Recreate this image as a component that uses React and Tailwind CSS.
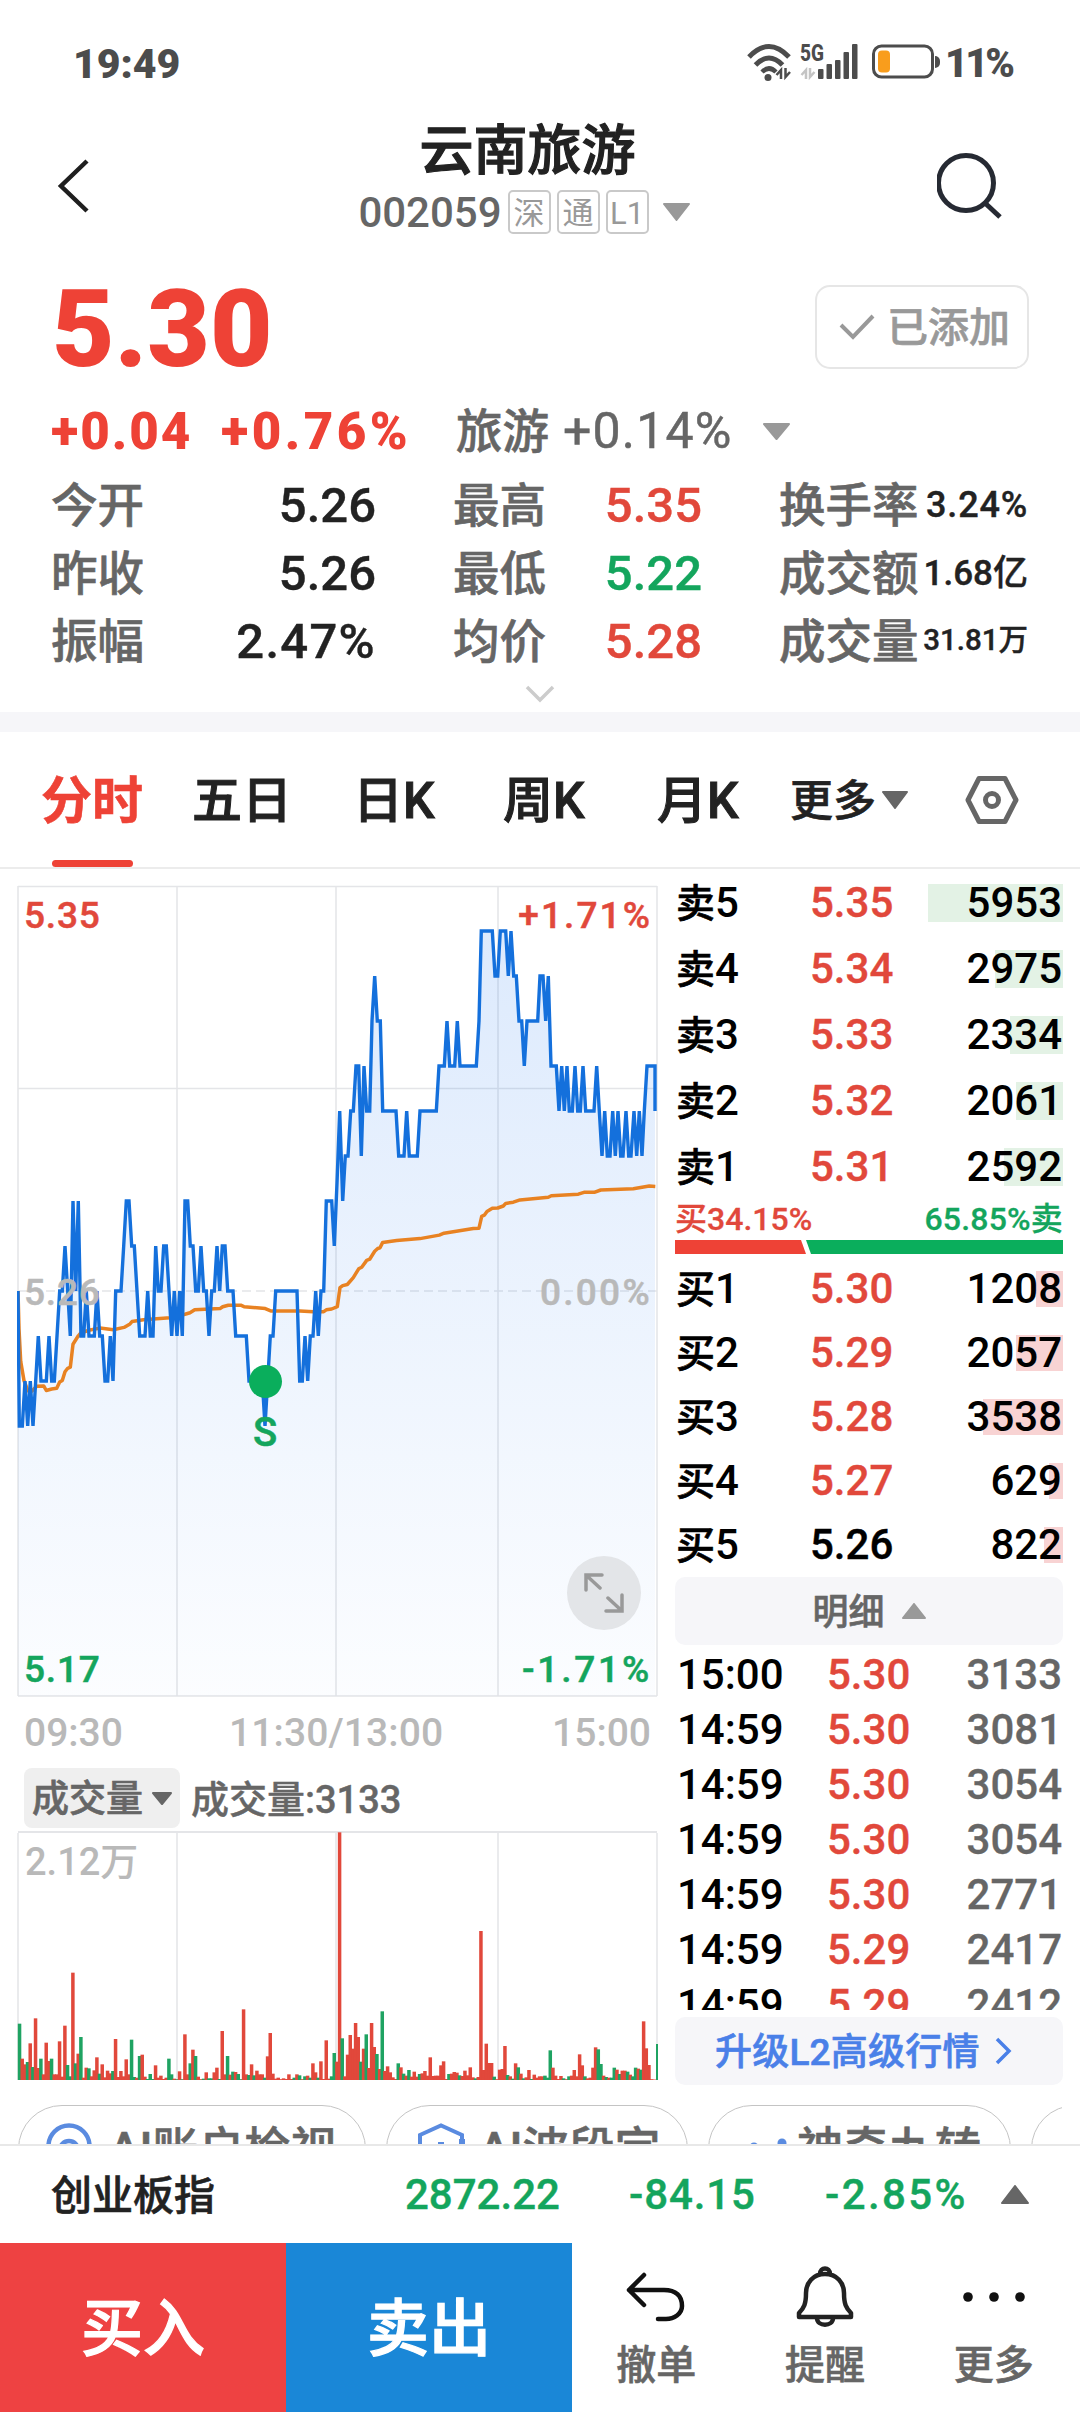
import React from "react";

const PRICE =
  "54:0 58:-3 67:-3 75:-2 83:-3 91:-2 99:-3 107:-2 115:-1 123:-2 139:-2 147:-1 155:-2 163:-2 171:-1 179:0 187:0 195:1 203:0 211:-1 219:2 227:0 235:2 243:-1 251:-1 259:0 267:-1 283:-1 291:0 299:-1 307:-1 315:-2 323:-2 331:-1 339:-2 347:0 363:0 371:1 379:2 387:2 395:1 403:1 411:0 419:-1 435:-1 443:0 451:-1 459:-1 467:1 475:0 483:0 491:1 499:1 507:0 515:-1 523:0 531:-1 539:0 547:-1 555:2 563:2 571:1 579:1 587:0 595:0 603:1 611:0 619:0 627:-1 635:0 643:0 651:1 659:0 667:1 675:1 683:0 699:0 707:-1 739:-1 747:-2 787:-2 795:-3 803:-2 811:-1 819:-1 827:0 891:0 899:-2 907:-2 915:-1 923:-2 931:-1 939:-1 947:0 955:-1 963:0 971:0 979:2 995:2 1003:1 1011:2.4 1019:4 1028:2 1036:3 1044:3 1052:4 1060:4 1068:5 1076:5 1084:3 1092:5 1100:4 1109:4 1116:6 1124:7 1132:6 1141:6 1148:4 1188:4 1196:3 1212:3 1220:4 1228:3 1252:3 1260:4 1309:4 1317:5 1333:5 1341:6 1349:5 1364:5 1372:6 1380:5 1429:5 1437:6 1444:8 1477:8 1485:7 1493:7 1501:8 1517:8 1525:7 1533:8 1541:7 1549:7 1557:6 1565:6 1573:5 1581:6 1613:6 1620:7 1629:7 1637:6 1645:7 1653:5 1669:5 1677:4 1685:5 1693:4 1701:5 1708:4 1717:4 1725:5 1733:4 1741:4 1749:5 1757:4 1782:4 1790:5 1798:4 1806:3 1814:4 1822:3 1830:3 1838:4 1846:3 1854:4 1862:3 1869:3 1878:4 1886:3 1893:3 1902:4 1910:3 1918:4 1926:3 1933:4 1941:5 1965:5 1965:4";

const AVG =
  "54:1101 57:1200 62:1285 72:1335 84:1362 96:1362 110:1350 131:1349 139:1361 155:1357 170:1355 179:1339 187:1335 195:1312 203:1303 211:1300 219:1240 235:1218 243:1210 270:1203 300:1198 340:1202 372:1196 390:1187 396:1181 430:1176 510:1171 555:1162 570:1158 584:1150 660:1147 668:1142 685:1138 722:1138 732:1142 796:1147 812:1153 900:1153 940:1155 971:1155 979:1150 995:1148 1012:1142 1020:1092 1028:1087 1042:1084 1060:1066 1076:1043 1085:1039 1100:1021 1109:1018 1124:997 1133:990 1140:988 1148:974 1190:969 1260:964 1318:955 1332:950 1420:938 1437:937 1445:906 1453:903 1461:893 1477:885 1493:884 1510:879 1517:872 1540:869 1560:863 1645:856 1654:852 1735:848 1752:843 1783:843 1802:837 1900:834 1948:827 1966:828";

// One entry per minute: height in thirds of a pixel, then r (up) or g (down).
const VOLUME =
  "169g 64r 47r 54g 110r 39g 185r 36r 64g 17r 112r 57r 64g 17r 17r 116r 10r 163r 45g 11g 322r 50g 79r 129g 7r 37r 35g 11r 29r 68r 19g 47r 8r 28r 20r 27g 123r 9r 27r 11r 62r 17r 121g 9g 7r 72g 76r 10r 3g 18g 3g 44r 7r 13r 3r 7r 64g 17g 4r 2g 26r 2g 137r 17r 50g 91r 72g 10r 2r 4g 23r 5g 5g 23r 37r 3g 147r 17r 72g 16r 25g 24r 18g 2g 212r 17r 15g 47r 14g 28r 17r 17r 7g 71r 141r 19r 4r 7r 2r 5r 3r 17r 3r 7g 17r 14g 2r 11g 13r 7g 50r 23r 7g 56r 3r 119r 4r 11g 81g 55r 743r 125g 11r 76r 135r 94r 171r 129r 55g 94r 137g 36r 171r 99r 78g 33r 206g 27r 41r 23r 8r 3r 50g 38r 19g 13r 30g 10r 25r 10r 18g 20r 27r 13r 68r 12r 13r 13r 44r 56r 3r 18g 19r 24r 22r 14g 12r 28r 14r 38r 8r 5g 9r 447r 30r 109r 51r 51r 10g 2r 31r 33r 102r 15g 11r 4g 50r 38g 19r 5g 8r 30r 3g 16r 7r 11r 11r 13g 7g 89g 37r 13r 3r 12r 5g 2r 11g 13r 30r 11r 77r 44r 11g 5r 7r 37r 98r 92g 48g 13r 9g 7r 7g 37g 31r 18g 28r 28r 25g 16r 11g 37g 34r 31g 176r 95r 45r 2r";

const pairs = (s) => s.split(" ").map((p) => p.split(":").map(Number));
const pricePts = pairs(PRICE)
  .map(([x, t]) => `${(x / 3 - 17).toFixed(1)},${(405 - t * 45).toFixed(1)}`)
  .join(" ");
const avgPts = pairs(AVG)
  .map(([x, y]) => `${(x / 3 - 17).toFixed(1)},${((y - 1101) / 2.613 + 405).toFixed(1)}`)
  .join(" ");
const volumes = VOLUME.split(" ").map((v) => ({ h: parseInt(v, 10) / 3, up: v.endsWith("r") }));

// Slight outline that brings Chinese glyphs to a medium weight.
const cjk = "pt-[3px] [-webkit-text-stroke:0.6px_currentColor] ";

function Tri({ w, h, color, up }) {
  return (
    <svg width={w} height={h} viewBox={`0 0 ${w} ${h}`} className="shrink-0">
      <polygon
        points={up ? `1,${h - 1} ${w - 1},${h - 1} ${w / 2},1` : `1,1 ${w - 1},1 ${w / 2},${h - 1}`}
        fill={color}
        stroke={color}
        strokeWidth="2"
        strokeLinejoin="round"
      />
    </svg>
  );
}

function StatusBar() {
  return (
    <div className="flex h-[124px] items-center pr-[66px] pl-[73px] text-[#4c4c4c]">
      <span className="pt-[4px] text-[41px] leading-none font-black">19:49</span>
      <svg className="ml-auto overflow-visible" width="188" height="40" viewBox="0 0 188 40" fill="none">
        <g stroke="#4c4c4c" strokeWidth="5">
          <path d="M2 15 Q22 -6 42 15" />
          <path d="M8.500 23 Q22 9 35.500 23" />
          <path d="M15 30 Q22 23 29 30" strokeWidth="4.500" />
        </g>
        <circle cx="21" cy="35.500" r="3.500" fill="#4c4c4c" />
        <path d="M34 37V28l-4.500 5M38.500 26v9l4.500-5" stroke="#4c4c4c" strokeWidth="2.500" />
        <text x="53" y="19" fontSize="23" fontWeight="800" fill="#4c4c4c" textLength="24" lengthAdjust="spacingAndGlyphs">
          5G
        </text>
        <path d="M59 37V28l-4.500 5M63 26v9l4.500-5" stroke="#c4c4c4" strokeWidth="2.500" />
        <g fill="#4c4c4c">
          <rect x="71" y="27" width="5.500" height="10" rx="1" />
          <rect x="79.500" y="22" width="5.500" height="15" rx="1" />
          <rect x="88" y="18" width="5.500" height="19" rx="1" />
          <rect x="96.500" y="10" width="5.500" height="27" rx="1" />
          <rect x="105" y="2" width="5.500" height="35" rx="1" />
        </g>
        <rect x="126.500" y="4" width="59" height="31" rx="8" stroke="#4c4c4c" strokeWidth="3" />
        <rect x="131" y="8.500" width="12" height="22" rx="4" fill="#f99d1c" />
      </svg>
      <span className="h-[12px] w-[5px] rounded-r-full bg-[#4c4c4c]" />
      <span className="ml-[5px] w-[69px] pt-[4px] text-[40px] leading-none font-black tracking-[-3px] whitespace-nowrap">11%</span>
    </div>
  );
}

function Badge({ children }) {
  return (
    <span className="flex h-[44px] w-[43px] items-center justify-center rounded-[5px] border-2 border-[#c9c9c9] pt-[2px] text-[31px] leading-none text-[#999]">
      {children}
    </span>
  );
}

function Header() {
  return (
    <div className="flex h-[124px] justify-between pr-[75px] pl-[56px]">
      <svg className="mt-[34px] w-[60px]" width="60" height="56" viewBox="0 0 60 56" fill="none" stroke="#1f1f1f" strokeWidth="4.500">
        <path d="M31 3L5 28L31 53" />
      </svg>
      <div className="ml-[2px] flex w-[350px] flex-col items-center">
        <div className="mt-px text-[54px] leading-[54px] font-medium text-[#222] [-webkit-text-stroke:1.2px_currentColor]">云南旅游</div>
        <div className="mt-[11px] mr-[7px] flex items-center gap-[6px]">
          <span className="pt-[2px] text-[42px] leading-none font-medium text-[#666]">002059</span>
          <Badge>深</Badge>
          <Badge>通</Badge>
          <Badge>L1</Badge>
          <span className="ml-[8px]">
            <Tri w={27} h={18} color="#999" />
          </span>
        </div>
      </div>
      <svg className="mt-[26px]" width="68" height="70" viewBox="0 0 68 70" fill="none" stroke="#262a33" strokeWidth="5">
        <circle cx="29" cy="33" r="27.500" />
        <path d="M48 53L63 67" />
      </svg>
    </div>
  );
}

function Quote() {
  return (
    <>
      <div className="flex h-[162px] items-center justify-between pr-[51px] pl-[52px]">
        <span className="text-[108px] leading-none font-black text-[#ee4236]">5.30</span>
        <div className="mb-[4px] flex h-[84px] w-[214px] items-center rounded-[15px] border-2 border-[#e6e6e6] pl-[22px] text-[#999]">
          <svg width="36" height="28" viewBox="0 0 36 28" fill="none" stroke="#999" strokeWidth="4">
            <path d="M2 12l12 12L34 3" />
          </svg>
          <span className={cjk + "ml-[12px] text-[41px] leading-none font-medium"}>已添加</span>
        </div>
      </div>
      <div className="mb-[19px] flex h-[42px] items-center pl-[51px] text-[50px] leading-none">
        <span className="w-[170px] text-[51px] font-black tracking-[2px] text-[#ee4236]">+0.04</span>
        <span className="w-[235px] text-[51px] font-black tracking-[3.5px] text-[#ee4236]">+0.76%</span>
        <span className={cjk + "w-[107px] text-[46.500px] font-medium text-[#666]"}>旅游</span>
        <span className="w-[200px] tracking-[1.2px] text-[#666] [-webkit-text-stroke:0.5px_currentColor]">+0.14%</span>
        <Tri w={27} h={17} color="#999" />
      </div>
    </>
  );
}

const STATS = [
  ["今开", "5.26", "", "最高", "5.35", "text-[#e1483b]", "换手率", "3.24%", "text-[36px] tracking-[0.8px]"],
  ["昨收", "5.26", "", "最低", "5.22", "text-[#14a55d]", "成交额", "1.68亿", "text-[35px]"],
  ["振幅", "2.47%", "tracking-[1.3px]", "均价", "5.28", "text-[#e1483b]", "成交量", "31.81万", "text-[29.500px]"],
];

function Stats() {
  const label = cjk + "text-[46.500px] text-[#666] ";
  const stroke = "[-webkit-text-stroke:0.4px_currentColor] ";
  return (
    <div>
      {STATS.map(([a, av, as, b, bv, bc, c, cv, cs]) => (
        <div key={a} className="flex h-[68px] items-center pl-[51px] text-[49px] leading-none font-medium text-[#222]">
          <span className={label + "w-[93px]"}>{a}</span>
          <span className={stroke + "w-[232px] text-right " + as}>{av}</span>
          <span className={label + "ml-[77px] w-[93px]"}>{b}</span>
          <span className={stroke + "w-[156px] text-right " + bc}>{bv}</span>
          <span className={label + "ml-[77px] w-[140px]"}>{c}</span>
          <span className={stroke + "w-[109px] text-right whitespace-nowrap " + cs}>{cv}</span>
        </div>
      ))}
      <div className="flex h-[37px] items-center justify-center">
        <svg width="30" height="18" viewBox="0 0 30 18" fill="none" stroke="#ccc" strokeWidth="3.500">
          <path d="M2 2l13 13L28 2" />
        </svg>
      </div>
    </div>
  );
}

function Tabs() {
  const tab = "pt-[3px] whitespace-nowrap [-webkit-text-stroke:1px_currentColor] ";
  return (
    <div className="relative flex h-[137px] items-center border-b-2 border-[#ececec] pl-[41px] text-[50px] leading-none font-medium text-[#222]">
      <span className="w-[151px] pt-[3px] text-[51px] font-bold text-[#ee4236] [-webkit-text-stroke:0.6px_currentColor]">分时</span>
      <span className={tab + "w-[161px]"}>五日</span>
      <span className={tab + "w-[150px]"}>日K</span>
      <span className={tab + "w-[154px]"}>周K</span>
      <span className={tab + "w-[133px]"}>月K</span>
      <span className={cjk + "w-[92px] text-[43px] whitespace-nowrap"}>更多</span>
      <Tri w={26} h={18} color="#666" />
      <svg className="ml-[57px]" width="54" height="48" viewBox="0 0 54 48" fill="none" stroke="#666" strokeWidth="5">
        <path d="M14 2.500H40L51 24L40 45.500H14L3 24Z" strokeLinejoin="round" />
        <circle cx="27" cy="24" r="6.500" />
      </svg>
      <div className="absolute bottom-0 left-[52px] h-[7px] w-[81px] rounded-full bg-[#ee4236]" />
    </div>
  );
}

function PriceChart() {
  return (
    <div className="relative mt-[16px] ml-[17px] h-[812px] w-[642px] text-[37px] leading-none font-medium [-webkit-text-stroke:0.5px_currentColor]">
      <svg width="642" height="812" viewBox="0 -1 642 812" fill="none">
        <defs>
          <linearGradient id="area" gradientUnits="userSpaceOnUse" x1="0" y1="40" x2="0" y2="810">
            <stop offset="0" stopColor="#1a73f0" stopOpacity="0.15" />
            <stop offset="1" stopColor="#1a73f0" stopOpacity="0.015" />
          </linearGradient>
        </defs>
        <g stroke="#e4e5e8" strokeWidth="1.500">
          <path d="M1 0.500H640M1 202.500H640M1 810H640" />
          <path d="M1 0V810M160 0V810M319 0V810M481 0V810M640 0V810" />
          <path d="M1 405H640" strokeDasharray="9 5" />
        </g>
        <polygon points={`1,810 ${pricePts} 638,810`} fill="url(#area)" />
        <polyline points={avgPts} stroke="#e88222" strokeWidth="3.500" strokeLinejoin="round" />
        <polyline points={pricePts} stroke="#1470dc" strokeWidth="3.400" strokeLinejoin="miter" strokeMiterlimit="1.500" />
        <circle cx="248.500" cy="495.500" r="16.500" fill="#0aae5c" />
      </svg>
      <span className="absolute top-[12px] left-[7px] tracking-[0.8px] text-[#e1483b]">5.35</span>
      <span className="absolute top-[12px] right-[7px] tracking-[2.1px] text-[#e1483b]">+1.71%</span>
      <span className="absolute top-[389px] left-[7px] tracking-[0.8px] text-[#b9b9b9]">5.26</span>
      <span className="absolute top-[389px] right-[7px] tracking-[2.3px] text-[#b9b9b9]">0.00%</span>
      <span className="absolute top-[766px] left-[7px] tracking-[0.8px] text-[#14a55d]">5.17</span>
      <span className="absolute top-[766px] right-[7px] tracking-[2.8px] text-[#14a55d]">-1.71%</span>
      <span className="absolute top-[528px] left-[236px] text-[40px] text-[#14a55d]">S</span>
      <div className="absolute top-[671px] left-[550px] flex size-[74px] items-center justify-center rounded-full bg-[#e3e5e8]">
        <svg width="40" height="40" viewBox="0 0 40 40" fill="none" stroke="#999" strokeWidth="3.500" strokeLinecap="round">
          <path d="M2 17V2H18M2 2L16 15M38 22V38H22M38 38L24 25" />
        </svg>
      </div>
    </div>
  );
}

function VolumeChart() {
  return (
    <div className="relative ml-[17px] h-[250px] w-[642px]">
      <svg width="642" height="250" viewBox="0 0 642 250">
        <g stroke="#e4e5e8" strokeWidth="1.500" fill="none">
          <path d="M1 1H640" strokeWidth="2" />
          <path d="M1 2V249M160 2V249M319 2V249M481 2V249M640 2V249" />
        </g>
        <path d="M1 248.500H640" stroke="#f0a59e" strokeWidth="1" />
        {volumes.map((v, i) => (
          <rect key={i} x={0.8 + i * 2.667} y={249 - v.h} width="3.500" height={v.h} fill={v.up ? "#e1483b" : "#1fa362"} />
        ))}
        <rect x="639" y="213" width="2" height="36" fill="#1fa362" />
      </svg>
      <span className="absolute top-[12px] left-[8px] text-[38px] leading-none font-medium text-[#b9b9b9]">2.12万</span>
    </div>
  );
}

function ChartColumn() {
  return (
    <div className="w-[675px]">
      <PriceChart />
      <div className="flex h-[71px] items-center pt-[2px] pr-[24px] pl-[24px] text-[39px] leading-none font-medium text-[#b9b9b9]">
        <span className="w-[205px]">09:30</span>
        <span className="tracking-[0.1px]">11:30/13:00</span>
        <span className="ml-auto">15:00</span>
      </div>
      <div className="mb-[3px] flex h-[60px] items-center pl-[24px] text-[37px] leading-none font-medium text-[#666]">
        <div className="flex h-[60px] w-[156px] items-center rounded-[8px] bg-[#efefef] pl-[8px]">
          <span className={cjk + "w-[120px]"}>成交量</span>
          <Tri w={20} h={13} color="#666" />
        </div>
        <span className="ml-[11px] pt-[3px] text-[38px] whitespace-nowrap [-webkit-text-stroke:0.4px_currentColor]">成交量:3133</span>
      </div>
      <VolumeChart />
    </div>
  );
}

const SELL = [
  ["卖", "5", "5.35", "5953", 135],
  ["卖", "4", "5.34", "2975", 68],
  ["卖", "3", "5.33", "2334", 53],
  ["卖", "2", "5.32", "2061", 47],
  ["卖", "1", "5.31", "2592", 59],
];
const BUY = [
  ["买", "1", "5.30", "1208", 27],
  ["买", "2", "5.29", "2057", 47],
  ["买", "3", "5.28", "3538", 80],
  ["买", "4", "5.27", "629", 14],
  ["买", "5", "5.26", "822", 19],
];
const TICKS = [
  ["15:00", "5.30", "3133"],
  ["14:59", "5.30", "3081"],
  ["14:59", "5.30", "3054"],
  ["14:59", "5.30", "3054"],
  ["14:59", "5.30", "2771"],
  ["14:59", "5.29", "2417"],
  ["14:59", "5.29", "2412"],
];

function Level({ row, buy }) {
  const [side, n, price, vol, w] = row;
  return (
    <div className={"relative mb-[28px] flex items-center pr-px " + (buy ? "h-[36px]" : "h-[38px]")}>
      <span className={"absolute top-0 right-0 h-full " + (buy ? "bg-[#f8d3d3]" : "bg-[#e3f2e5]")} style={{ width: w }} />
      <span className="relative w-[135px] pl-px">
        <span className="text-[39px] [-webkit-text-stroke:0.6px_currentColor]">{side}</span>
        {n}
      </span>
      <span className={"relative [-webkit-text-stroke:0.4px_currentColor] " + (price === "5.26" ? "text-black" : "text-[#e1483b]")}>{price}</span>
      <span className="relative ml-auto">{vol}</span>
    </div>
  );
}

function OrderBook() {
  return (
    <div className="w-[388px] text-[42px] leading-none font-medium text-black">
      <div className="h-[333px] pt-[15px]">
        {SELL.map((r) => (
          <Level key={r[1]} row={r} />
        ))}
      </div>
      <div className="flex h-[38px] items-center justify-between pb-[5px] text-[32px] [-webkit-text-stroke:0.3px_currentColor]">
        <span className="text-[#e1483b]">买34.15%</span>
        <span className="tracking-[0.2px] text-[#14a55d]">65.85%卖</span>
      </div>
      <svg className="block" width="388" height="14" viewBox="0 0 388 14">
        <polygon points="0,0 126,0 131,14 0,14" fill="#ee4236" />
        <polygon points="131,0 388,0 388,14 136,14" fill="#0aae5c" />
      </svg>
      <div className="flex h-[323px] flex-col pt-[17px]">
        {BUY.map((r) => (
          <div key={r[1]} className="h-[64px]">
            <Level row={r} buy />
          </div>
        ))}
      </div>
      <div className="flex h-[68px] items-center justify-center rounded-[10px] bg-[#f6f6f9] text-[36px] text-[#666]">
        <span className={cjk + "mr-[17px]"}>明细</span>
        <Tri w={24} h={16} color="#999" up />
      </div>
      <div className="h-[365px] overflow-hidden pt-[2px]">
        {TICKS.map(([t, p, v], i) => (
          <div key={i} className="flex h-[55px] items-center pr-px pl-[2px]">
            <span className="w-[150px]">{t}</span>
            <span className="text-[#e1483b] [-webkit-text-stroke:0.4px_currentColor]">{p}</span>
            <span className="ml-auto text-[#666] [-webkit-text-stroke:0.3px_currentColor]">{v}</span>
          </div>
        ))}
      </div>
      <div className="mt-[7px] flex h-[68px] items-center rounded-[10px] bg-[#f6f6f9] pl-[40px] text-[37px] whitespace-nowrap text-[#4a80e8]">
        <span className={cjk + "w-[280px] tracking-[0.2px]"}>升级L2高级行情</span>
        <svg width="18" height="28" viewBox="0 0 18 28" fill="none" stroke="#4a80e8" strokeWidth="3.500">
          <path d="M2 2l12 12L2 26" />
        </svg>
      </div>
    </div>
  );
}

function Chips() {
  const chip =
    "flex h-[88px] shrink-0 items-center rounded-full border border-[#c4c4c4] text-[46px] leading-none font-medium text-[#666] whitespace-nowrap [-webkit-text-stroke:0.6px_currentColor] ";
  return (
    <div className="mr-[18px] ml-[18px] flex h-[39px] items-start gap-[20px] overflow-hidden">
      <div className={chip + "w-[348px] pl-[27px]"}>
        <svg className="mb-[6px]" width="46" height="46" viewBox="0 0 46 46" fill="none" stroke="#5a8be0" strokeWidth="4.500">
          <circle cx="23" cy="23" r="20.500" />
          <circle cx="23" cy="27" r="9" />
        </svg>
        <span className="ml-[17px]">AI账户检视</span>
      </div>
      <div className={chip + "w-[302px] pl-[30px]"}>
        <svg className="mb-[6px]" width="48" height="46" viewBox="0 0 48 46" fill="none" stroke="#5a8be0" strokeWidth="4">
          <path d="M3 32V12L24 2.500L45 12V32L24 44Z" />
          <path d="M24 19v12M45 16v8" strokeWidth="6" />
        </svg>
        <span className="ml-[14px]">AI波段定</span>
      </div>
      <div className={chip + "w-[303px] pl-[38px]"}>
        <svg className="mb-[4px]" width="46" height="46" viewBox="0 0 46 46" fill="#5a8be0">
          <circle cx="7" cy="23" r="4.500" />
          <circle cx="35" cy="19" r="4.500" />
          <path d="M5 24l12 12 18-15v6L17 42z" />
        </svg>
        <span className="ml-[4px]">神奇九转</span>
      </div>
      <div className={chip + "w-[302px]"} />
    </div>
  );
}

function Action({ label, children }) {
  return (
    <div className="flex w-[170px] flex-col items-center">
      <div className="flex h-[102px] items-center justify-center pt-[6px]">{children}</div>
      <span className="pt-px text-[40px] leading-none font-medium text-[#666] [-webkit-text-stroke:0.6px_currentColor]">{label}</span>
    </div>
  );
}

function Footer() {
  const trade =
    "flex w-[286px] shrink-0 items-center justify-center pt-[5px] text-[62px] leading-none font-medium text-white [-webkit-text-stroke:1.2px_currentColor] ";
  return (
    <>
      <div className="flex h-[99px] items-center border-t-2 border-[#e8e8e8] pl-[51px] text-[42px] leading-none font-medium text-[#14a55d] [-webkit-text-stroke:0.4px_currentColor]">
        <span className={cjk + "w-[354px] text-[41px] text-[#222]"}>创业板指</span>
        <span className="w-[224px]">2872.22</span>
        <span className="w-[196px] tracking-[0.9px]">-84.15</span>
        <span className="w-[176px] tracking-[2.4px]">-2.85%</span>
        <Tri w={28} h={19} color="#666" up />
      </div>
      <div className="flex h-[169px]">
        <div className={trade + "bg-[#ee4242]"}>买入</div>
        <div className={trade + "bg-[#1a87d7]"}>卖出</div>
        <div className="flex w-[506px] shrink-0 justify-center">
          <Action label="撤单">
            <svg width="60" height="50" viewBox="0 0 60 50" fill="none" stroke="#111" strokeWidth="4.500" strokeLinecap="round" strokeLinejoin="round">
              <path d="M18 3L3 18L18 33M3 18H38C50 18 56 24 56 34C56 42 48 47 40 47H32" />
            </svg>
          </Action>
          <Action label="提醒">
            <svg width="58" height="62" viewBox="0 0 58 62" fill="none" stroke="#222" strokeWidth="4.500" strokeLinejoin="round">
              <path d="M29 8C17 8 10 17 10 27C10 38 8 42 3 47V51H55V47C50 42 48 38 48 27C48 17 41 8 29 8Z" />
              <path d="M24 8C24 0.500 34 0.500 34 8M21 52C21 61 37 61 37 52" />
            </svg>
          </Action>
          <Action label="更多">
            <svg width="64" height="12" viewBox="0 0 64 12" fill="#111">
              <circle cx="6" cy="6" r="4.800" />
              <circle cx="32" cy="6" r="4.800" />
              <circle cx="58" cy="6" r="4.800" />
            </svg>
          </Action>
        </div>
      </div>
    </>
  );
}

export default function App() {
  return (
    <div className="h-[2412px] w-[1080px] overflow-hidden bg-white font-['Roboto','Noto_Sans_CJK_SC',sans-serif]">
      <StatusBar />
      <Header />
      <Quote />
      <Stats />
      <div className="h-[20px] bg-[#f6f6f9]" />
      <Tabs />
      <div className="flex h-[1236px]">
        <ChartColumn />
        <OrderBook />
      </div>
      <Chips />
      <Footer />
    </div>
  );
}
